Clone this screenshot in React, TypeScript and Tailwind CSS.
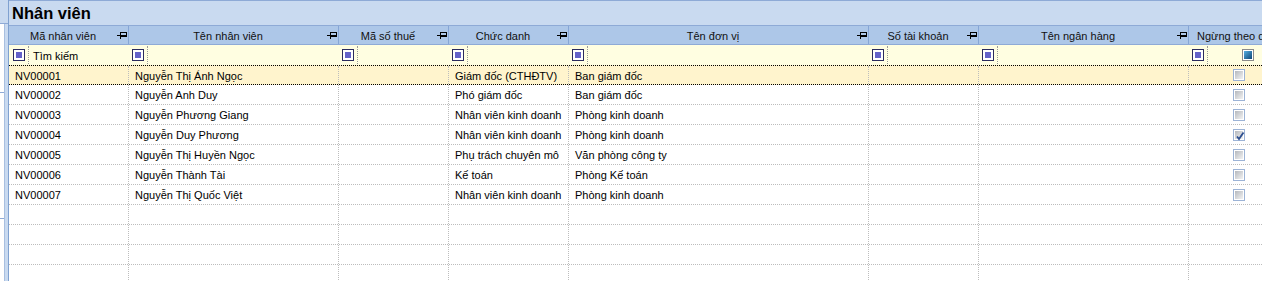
import React from "react";

const cols = [
  { title: "Mã nhân viên", w: 119 },
  { title: "Tên nhân viên", w: 210 },
  { title: "Mã số thuế", w: 110 },
  { title: "Chức danh", w: 120 },
  { title: "Tên đơn vị", w: 300 },
  { title: "Số tài khoản", w: 110 },
  { title: "Tên ngân hàng", w: 210 },
  { title: "Ngừng theo dõi", w: 104 },
];

type Row = { c: string[]; checked: boolean } | null;

const data: Row[] = [
  { c: ["NV00001", "Nguyễn Thị Ánh Ngọc", "", "Giám đốc (CTHĐTV)", "Ban giám đốc", "", ""], checked: false },
  { c: ["NV00002", "Nguyễn Anh Duy", "", "Phó giám đốc", "Ban giám đốc", "", ""], checked: false },
  { c: ["NV00003", "Nguyễn Phương Giang", "", "Nhân viên kinh doanh", "Phòng kinh doanh", "", ""], checked: false },
  { c: ["NV00004", "Nguyễn Duy Phương", "", "Nhân viên kinh doanh", "Phòng kinh doanh", "", ""], checked: true },
  { c: ["NV00005", "Nguyễn Thị Huyền Ngọc", "", "Phụ trách chuyên mô", "Văn phòng công ty", "", ""], checked: false },
  { c: ["NV00006", "Nguyễn Thành Tài", "", "Kế toán", "Phòng Kế toán", "", ""], checked: false },
  { c: ["NV00007", "Nguyễn Thị Quốc Việt", "", "Nhân viên kinh doanh", "Phòng kinh doanh", "", ""], checked: false },
  null,
  null,
  null,
  null,
];

function Pin() {
  return (
    <svg width="10" height="8" viewBox="0 0 10 8" shapeRendering="crispEdges" className="shrink-0">
      <path d="M0 4H3.5M3.5 0.5V7.5M3.5 1.5H9.5V5.5H3.5M3.5 4.5H9.5" stroke="#000" strokeWidth="1" fill="none" />
    </svg>
  );
}

function FilterBox() {
  return (
    <div className="w-[12px] h-[12px] shrink-0 border border-[#2b2b5e] bg-white p-[2px]">
      <div className="w-full h-full bg-[#6462c9]" />
    </div>
  );
}

function FilterDots() {
  return <div className="self-stretch my-[1px] w-0 border-l border-dotted border-[#9a9a9a]" />;
}

function DataCheck({ checked }: { checked: boolean }) {
  return (
    <div className="relative w-[12px] h-[12px] shrink-0 border border-[#9cb3d6] bg-white p-[1px]">
      <div className="w-full h-full bg-linear-to-br from-[#b4b8be] to-[#f3f3f3]" />
      {checked && (
        <svg width="10" height="10" viewBox="0 0 10 10" className="absolute left-[1px] top-[1px]">
          <path d="M2 5.5L4 8L8.5 1.5" stroke="#2d4f90" strokeWidth="1.8" fill="none" />
        </svg>
      )}
    </div>
  );
}

export default function App() {
  return (
    <div
      className="w-[1262px] h-[281px] overflow-hidden flex bg-white text-[11px] text-black"
      style={{ fontFamily: '"Liberation Sans", Arial, sans-serif' }}
    >
      {/* left strip */}
      <div className="w-[8px] shrink-0 flex flex-col">
        <div className="h-[24px] bg-[#c9daf0] border-b border-[#8eaad6]" />
        <div className="flex-1 flex">
          <div className="w-[4px] flex flex-col">
            <div className="h-[68px]" />
            <div className="h-[1px] bg-[#8eaad6]" />
            <div className="h-[125px]" />
            <div className="h-[1px] bg-[#8eaad6]" />
          </div>
          <div className="w-[1px] bg-[#a8bfe0]" />
          <div className="flex-1 bg-[#c9daf0]" />
        </div>
      </div>

      {/* main panel */}
      <div className="flex-1 flex flex-col border-l border-[#7fa1d0] min-w-0">
        {/* title */}
        <div className="h-[25px] shrink-0 border-t border-[#8eaad6] bg-[#c9daf0] flex items-center pl-[3px]">
          <span className="font-bold text-[16.5px] leading-none text-black">Nhân viên</span>
        </div>

        {/* header */}
        <div className="h-[20px] shrink-0 flex bg-[#adc7e8] border-t border-[#8eaad6] border-b border-b-[#8eaad6]">
          {cols.map((c, i) => (
            <div
              key={i}
              className={`shrink-0 flex items-center pr-[1px] ${i > 0 ? "border-l border-[#86a6d6]" : ""}`}
              style={{ width: c.w }}
            >
              <div className="flex-1 text-center whitespace-nowrap overflow-hidden text-[#111] pt-[2px]">{c.title}</div>
              <Pin />
            </div>
          ))}
        </div>

        {/* filter row */}
        <div className="h-[20px] shrink-0 flex bg-[#fffee1]">
          {cols.map((c, i) => (
            <div key={i} className="shrink-0 flex items-center pl-[4px]" style={{ width: c.w }}>
              <FilterBox />
              <div className="ml-[3px] self-stretch flex">
                <FilterDots />
              </div>
              {i === 0 && <span className="ml-[4px] whitespace-nowrap leading-none pt-[2px]">Tìm kiếm</span>}
              {i === 7 && (
                <div className="ml-[34px] w-[12px] h-[12px] shrink-0 border border-[#8b8b8b] bg-white p-[1px]">
                  <div className="w-full h-full bg-linear-to-br from-[#56b0e2] to-[#0f4777]" />
                </div>
              )}
            </div>
          ))}
        </div>

        {/* data rows */}
        {data.map((r, ri) => (
          <div
            key={ri}
            className={`h-[20px] shrink-0 flex border-b border-dotted ${
              ri === 0 ? "bg-[#fff4cd] border-t border-black border-b-black" : "border-b-[#bdbdbd]"
            }`}
          >
            {cols.map((c, i) => (
              <div
                key={i}
                className={`shrink-0 flex items-center overflow-hidden whitespace-nowrap ${
                  i > 0 ? "border-l border-dotted border-[#bdbdbd]" : ""
                } ${i === 7 ? "pl-[44px]" : "pl-[6px]"}`}
                style={{ width: c.w }}
              >
                {r && i < 7 && <span className="leading-none pt-[2px]">{r.c[i]}</span>}
                {r && i === 7 && <DataCheck checked={r.checked} />}
              </div>
            ))}
          </div>
        ))}
      </div>
    </div>
  );
}
